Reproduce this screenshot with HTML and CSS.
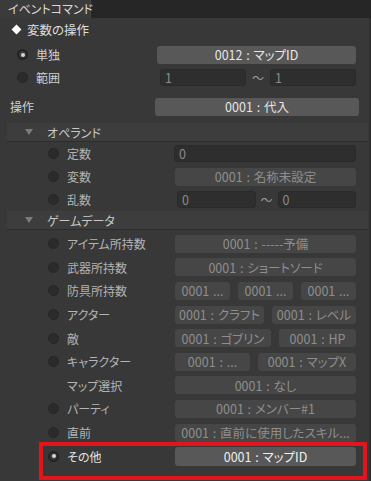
FILE: index.html
```html
<!DOCTYPE html>
<html lang="ja">

<head>
    <meta charset="UTF-8">
    <title>イベントコマンド</title>
    <link rel="stylesheet" href="styles.css">
</head>

<body>
    <div class="tabbar">
        <div class="tab">イベントコマンド</div>
    </div>

    <div class="panel">
        <div class="title"><span class="diamond"></span><span>変数の操作</span></div>

        <div class="row top first">
            <span class="radio on"></span><span class="label">単独</span>
            <div class="ctl single">
                <div class="btn on">0012 : マップID</div>
            </div>
        </div>
        <div class="row top">
            <span class="radio"></span><span class="label">範囲</span>
            <div class="ctl range">
                <div class="input">1</div>
                <span class="tilde">〜</span>
                <div class="input">1</div>
            </div>
        </div>
        <div class="row op">
            <span class="label op-label">操作</span>
            <div class="ctl op-ctl">
                <div class="btn on">0001 : 代入</div>
            </div>
        </div>

        <div class="section first-section"><span class="tri"></span>オペランド</div>

        <div class="row sub tight">
            <span class="radio"></span><span class="label">定数</span>
            <div class="ctl const">
                <div class="input">0</div>
            </div>
        </div>
        <div class="row sub tight">
            <span class="radio"></span><span class="label">変数</span>
            <div class="ctl">
                <div class="btn">0001 : 名称未設定</div>
            </div>
        </div>
        <div class="row sub tight">
            <span class="radio"></span><span class="label">乱数</span>
            <div class="ctl rand">
                <div class="input">0</div>
                <span class="tilde">〜</span>
                <div class="input">0</div>
            </div>
        </div>

        <div class="section"><span class="tri"></span>ゲームデータ</div>

        <div class="rows">
            <div class="row sub">
                <span class="radio"></span><span class="label">アイテム所持数</span>
                <div class="ctl"><div class="btn">0001 : -----予備</div></div>
            </div>
            <div class="row sub">
                <span class="radio"></span><span class="label">武器所持数</span>
                <div class="ctl"><div class="btn">0001 : ショートソード</div></div>
            </div>
            <div class="row sub">
                <span class="radio"></span><span class="label">防具所持数</span>
                <div class="ctl three">
                    <div class="btn">0001 ...</div>
                    <div class="btn">0001 ...</div>
                    <div class="btn">0001 ...</div>
                </div>
            </div>
            <div class="row sub">
                <span class="radio"></span><span class="label">アクター</span>
                <div class="ctl two actor">
                    <div class="btn">0001 : クラフト</div>
                    <div class="btn">0001 : レベル</div>
                </div>
            </div>
            <div class="row sub">
                <span class="radio"></span><span class="label">敵</span>
                <div class="ctl two enemy">
                    <div class="btn">0001 : ゴブリン</div>
                    <div class="btn">0001 : HP</div>
                </div>
            </div>
            <div class="row sub">
                <span class="radio"></span><span class="label">キャラクター</span>
                <div class="ctl two chara">
                    <div class="btn">0001 : ...</div>
                    <div class="btn">0001 : マップX</div>
                </div>
            </div>
            <div class="row sub">
                <span class="radio none"></span><span class="label">マップ選択</span>
                <div class="ctl"><div class="btn">0001 : なし</div></div>
            </div>
            <div class="row sub">
                <span class="radio"></span><span class="label">パーティ</span>
                <div class="ctl"><div class="btn">0001 : メンバー#1</div></div>
            </div>
            <div class="row sub">
                <span class="radio"></span><span class="label">直前</span>
                <div class="ctl"><div class="btn">0001 : 直前に使用したスキル...</div></div>
            </div>
            <div class="row sub selected">
                <span class="radio on"></span><span class="label">その他</span>
                <div class="ctl"><div class="btn on big">0001 : マップID</div></div>
            </div>
        </div>
    </div>
</body>

</html>
```

FILE: styles.css
```css
* {
    box-sizing: border-box;
}

html,
body {
    margin: 0;
    padding: 0;
}

body {
    width: 371px;
    height: 481px;
    overflow: hidden;
    background: #383838;
    font-family: "Noto Sans CJK JP", "Noto Sans", sans-serif;
    font-size: 12px;
    font-feature-settings: "palt";
    color: #c4c4c4;
}

.tabbar {
    height: 18px;
    background: #262626;
    display: flex;
}

.tab {
    width: 91px;
    background: #3b3b3b;
    color: #dadada;
    padding-left: 8px;
    line-height: 18px;
    white-space: nowrap;
    border-right: 1px solid #444;
}

.panel {
    height: 463px;
    border-right: 2px solid #2e2e2e;
}

.title {
    height: 22px;
    display: flex;
    align-items: center;
    color: #dedede;
    font-size: 12.5px;
}

.diamond {
    flex: none;
    width: 7px;
    height: 7px;
    background: #fff;
    transform: rotate(45deg);
    margin: 0 7.5px 0 12.5px;
}

.row {
    height: 23px;
    display: flex;
    align-items: center;
    padding-right: 13px;
    position: relative;
}

.row.first {
    margin-top: 3px;
}

.row.op {
    margin-top: 6px;
}

.rows {
    margin-top: 2px;
}

.rows .row {
    height: 23.6px;
}

.radio {
    width: 11px;
    height: 11px;
    border-radius: 50%;
    background: #2b2b2b;
    border: 1px solid #262626;
    flex: none;
    display: flex;
    align-items: center;
    justify-content: center;
}

.radio.on {
    background: #3c3c3c;
    border: 2px solid #232323;
}

.radio.on::after {
    content: "";
    width: 4px;
    height: 4px;
    border-radius: 50%;
    background: #d6d6d6;
}

.radio.none {
    visibility: hidden;
}

.top .radio {
    margin-left: 17px;
}

.label {
    margin-left: 8px;
    white-space: nowrap;
}

.top .label {
    color: #d0d0d0;
}

.op-label {
    margin-left: 10px;
    color: #d0d0d0;
}

.sub .radio {
    margin-left: 48px;
}

.sub .label {
    color: #b4b4b4;
}

.ctl {
    margin-left: auto;
    width: 181px;
    display: flex;
    align-items: center;
    gap: 8px;
}

.ctl.single {
    width: 199px;
}

.ctl.range {
    width: 196px;
    gap: 6px;
}

.ctl.op-ctl {
    width: 204px;
    margin-right: -3px;
}

.ctl.const {
    width: 182px;
}

.ctl.rand {
    width: 179px;
    gap: 5px;
}

.btn {
    flex: 1;
    min-width: 0;
    height: 18px;
    border-radius: 3px;
    background: #464646;
    color: #8e8e8e;
    display: flex;
    align-items: center;
    justify-content: center;
    white-space: nowrap;
    overflow: hidden;
    font-size: 12.5px;
    word-spacing: 1px;
}

.btn.on {
    background: #585858;
    color: #e6e6e6;
}

.btn.big {
    height: 19px;
    color: #efefef;
}

.actor .btn:first-child {
    flex: 0 0 89px;
}

.enemy .btn:first-child {
    flex: 0 0 96px;
}

.chara .btn:first-child {
    flex: 0 0 75px;
}

.input {
    flex: 1;
    height: 17px;
    border-radius: 3px;
    background: #2e2e2e;
    border: 1px solid #2a2a2a;
    color: #8a8a8a;
    padding-left: 4px;
    line-height: 15px;
    font-size: 12.5px;
}

.tilde {
    color: #9c9c9c;
    flex: none;
}

.section {
    height: 19px;
    margin: 0 1px 0 7px;
    background: #3d3d3d;
    border-bottom: 1px solid #2d2d2d;
    display: flex;
    align-items: center;
    color: #c8c8c8;
}

.section.first-section {
    margin-top: 5px;
}

.tri {
    width: 0;
    height: 0;
    border-left: 4px solid transparent;
    border-right: 4px solid transparent;
    border-top: 6px solid #7c7c7c;
    margin: 0 14px 0 18px;
}

.selected .label {
    color: #e2e2e2;
}

.selected::after {
    content: "";
    position: absolute;
    left: 39px;
    right: 2px;
    top: -2px;
    height: 30px;
    border: 4px solid #e3141c;
}
```
